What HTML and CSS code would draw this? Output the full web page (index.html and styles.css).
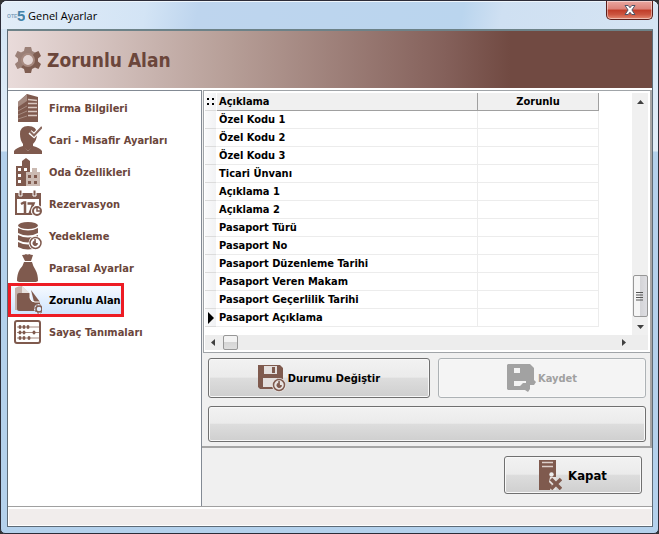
FILE: index.html
```html
<!DOCTYPE html>
<html lang="tr">
<head>
    <meta charset="utf-8">
    <title>Genel Ayarlar</title>
    <link rel="stylesheet" href="styles.css">
</head>
<body>
    <div class="window">
        <div class="titlebar">
            <svg class="app-icon" width="18" height="18" viewBox="0 0 18 18">
                <text x="0" y="12" font-family="Liberation Sans" font-size="5" fill="#7fa3bd">OTE</text>
                <text x="10" y="15" font-family="Liberation Sans" font-size="15" font-weight="bold" fill="#4583a8">5</text>
            </svg>
            <span class="window-title">Genel Ayarlar</span>
            <button class="close-btn" aria-label="Kapat">
                <svg width="12" height="10" viewBox="0 0 12 10">
                    <path d="M1 .5h3.200L6 2.700 7.800.5H11L7.900 5 11 9.500H7.800L6 7.300 4.200 9.500H1L4.100 5z" fill="#fff" stroke="#4c5468"/>
                </svg>
            </button>
        </div>

        <div class="client">
            <header class="banner">
                <svg width="26" height="26" viewBox="0 0 26 26">
                    <path fill="#7f5d51" fill-rule="evenodd" d="M10 0h6l1 4 3 1.500 3.500-1.500 2.500 5-3 2.500v3l3 2.500-2.500 5-3.500-1.500-3 1.500-1 4h-6l-1-4-3-1.500L2.500 22 0 17l3-2.500v-3L0 9l2.500-5L6 5.500 9 4zM13 7.500a5.500 5.500 0 1 0 0 11 5.500 5.500 0 0 0 0-11z"/>
                    <path fill="#fff" opacity=".22" d="M0 9l2.500-5L6 5.500 9 4l1-4h6l1 4 3 1.500L17 9A5.500 5.500 0 0 0 9 17L6 20.500 2.500 22 0 17l3-2.500v-3z"/>
                    <circle cx="13" cy="13" r="6" fill="none" stroke="#a88a80" stroke-width="2"/>
                </svg>
                <h1>Zorunlu Alan</h1>
            </header>

            <div class="content">
                <nav class="sidebar">
                    <a href="#" class="nav-item">
                        <svg width="28" height="28" viewBox="0 0 28 28">
                            <path d="M4 8L13 0v28H4z" fill="#7f5a4e"/>
                            <path d="M4 8L13 0v7L4 13z" fill="#a58a80"/>
                            <path d="M4 17l9-5M4 21l9-4M4 25l9-3" stroke="#a58a80"/>
                            <path d="M13 0l11 3v25H13z" fill="#7f5a4e"/>
                            <path d="M14 5.500l9 1M14 9.500h9M14 13.500h9M14 17.500h9M14 21.500h9" stroke="#d9c8c1" stroke-width="1.500"/>
                        </svg>
                        Firma Bilgileri
                    </a>
                    <a href="#" class="nav-item">
                        <svg width="28" height="28" viewBox="0 0 28 28">
                            <path d="M14 0q9 0 9 8 0 6-4 10v3l-5 4-5-4v-3Q6 14 6 8q0-8 8-8z" fill="#7f5a4e"/>
                            <path d="M0 28v-3q2-3 9-5l5 5 5-5q7 2 9 5v3z" fill="#7f5a4e"/>
                            <path d="M16 6l4 3.500L28 1" fill="none" stroke="#fff" stroke-width="4.500"/>
                            <path d="M16 5.500l4 4L28 1" fill="none" stroke="#8a685d" stroke-width="2.200"/>
                        </svg>
                        Cari - Misafir Ayarları
                    </a>
                    <a href="#" class="nav-item">
                        <svg width="28" height="28" viewBox="0 0 28 28">
                            <path d="M2 8h6V3l4-3 4 3v25H2z" fill="#7f5a4e"/>
                            <path d="M12 14h6v-4h5v4h3v14H12z" fill="#cbbab2"/>
                            <path d="M4 10h3v3H4zM10 10h3v3h-3zM4 16h3v3H4zM4 22h3v3H4z" fill="#fff"/>
                            <path d="M14 17h3v3h-3zM20 17h3v3h-3zM14 23h3v3h-3zM20 23h3v3h-3z" fill="#7f5a4e"/>
                        </svg>
                        Oda Özellikleri
                    </a>
                    <a href="#" class="nav-item">
                        <svg width="28" height="28" viewBox="0 0 28 28">
                            <path d="M1 3h26v22H1z" fill="#7f5a4e"/>
                            <path d="M3 9h22v14H3z" fill="#fff"/>
                            <path d="M5 0h3v6H5zM19 0h3v6h-3z" fill="#7f5a4e" stroke="#fff"/>
                            <path d="M7 14l3-1.500h1V24M13.500 13.500h6L15.500 24" fill="none" stroke="#7f5a4e" stroke-width="2.500"/>
                            <circle cx="23" cy="21" r="6" fill="#fff"/>
                            <circle cx="23" cy="21" r="4" fill="#fff" stroke="#7f5a4e" stroke-width="2"/>
                            <path d="M23 18v3h3" fill="none" stroke="#7f5a4e" stroke-width="1.500"/>
                        </svg>
                        Rezervasyon
                    </a>
                    <a href="#" class="nav-item">
                        <svg width="28" height="28" viewBox="0 0 28 28">
                            <ellipse cx="14" cy="3.500" rx="10" ry="3.500" fill="#7f5a4e"/>
                            <path d="M4 6q10 5 20 0v5q-10 5-20 0zM4 13q10 5 20 0v5q-10 5-20 0zM4 20q10 5 20 0v5q-10 5-20 0z" fill="#7f5a4e"/>
                            <circle cx="21.500" cy="21" r="7" fill="#fff"/>
                            <circle cx="21.500" cy="21" r="5.500" fill="none" stroke="#7f5a4e" stroke-width="1.500"/>
                            <path d="M21 17v2a2.300 2.300 0 1 0 2.500 2.500h-2z" fill="#7f5a4e" stroke="#7f5a4e"/>
                        </svg>
                        Yedekleme
                    </a>
                    <a href="#" class="nav-item">
                        <svg width="28" height="28" viewBox="0 0 28 28">
                            <path d="M8 1q3 0 4-1 2 1 3 0 2 1 4 1l-2 6h-6z" fill="#7f5a4e"/>
                            <path d="M10 8h8q1 4 3 7 3 5 3 12l-2 1H5l-2-1q0-7 3-12 3-3 4-7z" fill="#7f5a4e"/>
                        </svg>
                        Parasal Ayarlar
                    </a>
                    <a href="#" class="nav-item selected">
                        <svg width="28" height="28" viewBox="0 0 28 28">
                            <path d="M1 2q3-2 7-2l8 8v16H1z" fill="#c4b2ab"/>
                            <path d="M8 0l10 9-3-1H8z" fill="#e8e2df"/>
                            <path d="M17 4l9 12h-6z" fill="#7f5a4e"/>
                            <path d="M5 7h11v5q1 4 5 4h5v9H5q-2 0-2-2V9q0-2 2-2z" fill="#7f5a4e"/>
                            <path d="M16 5v7q1 4 5 4h5" fill="none" stroke="#fff"/>
                            <circle cx="25" cy="23" r="5" fill="#e0edfd"/>
                            <circle cx="25" cy="23" r="3" fill="none" stroke="#7f5a4e" stroke-width="1.500"/>
                            <circle cx="25" cy="23" r="4.200" fill="none" stroke="#7f5a4e" stroke-dasharray="1.800 1.500"/>
                        </svg>
                        Zorunlu Alan
                    </a>
                    <a href="#" class="nav-item">
                        <svg width="28" height="28" viewBox="0 0 28 28">
                            <rect x="1" y="3" width="25" height="22" rx="2" fill="#fff" stroke="#7f5a4e" stroke-width="2"/>
                            <path d="M3 9h22M3 14.500h22M3 20h22" stroke="#a58a80"/>
                            <g fill="#7f5a4e">
                                <ellipse cx="6" cy="9" rx="1.500" ry="2"/><ellipse cx="10" cy="9" rx="1.500" ry="2"/><ellipse cx="14" cy="9" rx="1.500" ry="2"/>
                                <ellipse cx="6" cy="14.500" rx="1.500" ry="2"/><ellipse cx="10" cy="14.500" rx="1.500" ry="2"/><ellipse cx="20" cy="14.500" rx="1.500" ry="2"/>
                                <ellipse cx="6" cy="20" rx="1.500" ry="2"/><ellipse cx="10" cy="20" rx="1.500" ry="2"/><ellipse cx="15" cy="20" rx="1.500" ry="2"/>
                            </g>
                        </svg>
                        Sayaç Tanımaları
                    </a>
                </nav>

                <div class="right">
                    <main class="panel">
                        <div class="grid-box">
                            <div class="grid-view">
                                <table class="grid">
                                    <thead>
                                        <tr>
                                            <th class="mark"><svg width="8" height="8" viewBox="0 0 8 8"><path d="M0 0h2v2H0zM5 0h2v2H5zM0 5h2v2H0zM5 5h2v2H5z"/></svg></th>
                                            <th class="name">Açıklama</th>
                                            <th class="req">Zorunlu</th>
                                        </tr>
                                    </thead>
                                    <tbody>
                                        <tr><td class="mark"></td><td>Özel Kodu 1</td><td></td></tr>
                                        <tr><td class="mark"></td><td>Özel Kodu 2</td><td></td></tr>
                                        <tr><td class="mark"></td><td>Özel Kodu 3</td><td></td></tr>
                                        <tr><td class="mark"></td><td>Ticari Ünvanı</td><td></td></tr>
                                        <tr><td class="mark"></td><td>Açıklama 1</td><td></td></tr>
                                        <tr><td class="mark"></td><td>Açıklama 2</td><td></td></tr>
                                        <tr><td class="mark"></td><td>Pasaport Türü</td><td></td></tr>
                                        <tr><td class="mark"></td><td>Pasaport No</td><td></td></tr>
                                        <tr><td class="mark"></td><td>Pasaport Düzenleme Tarihi</td><td></td></tr>
                                        <tr><td class="mark"></td><td>Pasaport Veren Makam</td><td></td></tr>
                                        <tr><td class="mark"></td><td>Pasaport Geçerlilik Tarihi</td><td></td></tr>
                                        <tr><td class="mark"><svg width="6" height="12" viewBox="0 0 6 12"><path d="M0 0l6 6-6 6z"/></svg></td><td>Pasaport Açıklama</td><td></td></tr>
                                    </tbody>
                                </table>
                            </div>
                            <div class="vscroll">
                                <svg class="arrow" width="7" height="4" viewBox="0 0 7 4"><path d="M0 4l3.500-4L7 4z"/></svg>
                                <div class="vthumb">
                                    <svg width="8" height="9" viewBox="0 0 8 9"><path d="M0 .5h7M0 3h7M0 5.500h7M0 8h7" stroke="#555"/></svg>
                                </div>
                                <svg class="arrow" width="7" height="4" viewBox="0 0 7 4"><path d="M0 0l3.500 4L7 0z"/></svg>
                            </div>
                            <div class="hscroll">
                                <svg class="arrow" width="4" height="7" viewBox="0 0 4 7"><path d="M4 0L0 3.500 4 7z"/></svg>
                                <div class="hthumb"></div>
                                <svg class="arrow" width="4" height="7" viewBox="0 0 4 7"><path d="M0 0l4 3.500L0 7z"/></svg>
                            </div>
                        </div>

                        <div class="buttons">
                            <button class="btn btn-change">
                                <svg width="28" height="28" viewBox="0 0 28 28">
                                    <path d="M0 1h22l3 3v21H2l-2-2z" fill="#7f5a4e"/>
                                    <path d="M6 2h13v8H6zM5 14h14v9H5z" fill="#e4dfdd"/>
                                    <path d="M14 3h3v6h-3z" fill="#7f5a4e"/>
                                    <circle cx="21" cy="21" r="7" fill="#e8e4e2"/>
                                    <circle cx="21" cy="21" r="5.500" fill="none" stroke="#7f5a4e" stroke-width="1.500"/>
                                    <path d="M21 17v2a2.300 2.300 0 1 0 2.500 2.500h-2z" fill="#7f5a4e" stroke="#7f5a4e"/>
                                </svg>
                                Durumu Değiştir
                            </button>
                            <button class="btn btn-save" disabled>
                                <svg width="29" height="28" viewBox="0 0 29 28">
                                    <path fill="#a2a2a2" fill-rule="evenodd" d="M1 0h22l4 4v12l2 2-2 3h-4v4l-2 3-3-2H1l-1-1V1zM7 4v5h6V4zM7 17v5h6l3-3h3v-2z"/>
                                </svg>
                                Kaydet
                            </button>
                        </div>
                        <button class="btn btn-wide" aria-label="Durum"></button>
                    </main>

                    <footer class="actions">
                        <button class="btn btn-close">
                            <svg width="23" height="30" viewBox="0 0 23 30">
                                <path d="M0 0h17v30H0z" fill="#7f5a4e"/>
                                <path d="M3 2.500h11M3 6.500h11" stroke="#ddd0cb" stroke-width="1.500"/>
                                <circle cx="12.500" cy="14.500" r="2.200" fill="#eee"/>
                                <path d="M11 17l-1 5 3 3-2 5h6V17z" fill="#e6e0de"/>
                                <path d="M12 19l10 10M22 19L12 29" stroke="#7f5a4e" stroke-width="3.500"/>
                            </svg>
                            Kapat
                        </button>
                    </footer>
                </div>
            </div>

            <div class="statusbar"></div>
        </div>
    </div>
</body>
</html>
```
FILE: styles.css
```css
* {
    box-sizing: border-box;
}

body {
    margin: 0;
    background: #333;
    font-family: "DejaVu Sans Condensed", "Noto Sans", sans-serif;
    font-size: 11px;
    font-weight: bold;
    color: #000;
}

button {
    font: inherit;
}

svg {
    flex: none;
    display: block;
}

/* window frame */
.window {
    display: flex;
    flex-direction: column;
    min-height: 100vh;
    padding: 0 5px 6px 6px;
    border: 1px solid #2c2c38;
    border-radius: 7px 7px 5px 5px;
    background: linear-gradient(180deg, rgba(255,255,255,0.4) 0, rgba(255,255,255,0.6) 150px, rgba(255,255,255,0) 151px), #b4d1ec;
}

.titlebar {
    display: flex;
    align-items: center;
    height: 28px;
    margin: 0 -5px 0 -6px;
    padding-left: 6px;
    border-radius: 6px 6px 0 0;
    background: linear-gradient(100deg, #e2edf8 0%, #d3e4f5 22%, #bed5ee 30%, #bad5ee 70%, #cfe0f2 76%, #d5e4f3 100%);
    box-shadow: inset 0 1px #eef5fb;
}

.window-title {
    flex: 1;
    padding-left: 3px;
    font-family: "Open Sans", sans-serif;
    font-weight: normal;
}

.close-btn {
    display: flex;
    align-items: center;
    justify-content: center;
    align-self: flex-start;
    width: 47px;
    height: 19px;
    margin-right: 5px;
    padding: 0;
    border: 1px solid #5c1e1a;
    border-top: none;
    border-radius: 0 0 5px 5px;
    background: linear-gradient(#eaa7a0 0%, #dc8278 45%, #c03c28 50%, #cb5540 75%, #e58a73 100%);
    box-shadow: inset 0 0 0 1px rgba(255,255,255,0.45);
}

.client {
    flex: 1;
    display: flex;
    flex-direction: column;
    border: 1px solid #5d6a76;
    border-top: 2px solid #6d8288;
    background: #f0f0f0;
}

.banner {
    display: flex;
    align-items: center;
    gap: 6px;
    height: 57px;
    padding-left: 7px;
    background: linear-gradient(90deg, #e9dbda 0%, #b79f98 34%, #84605a 68%, #714a42 78%, #714a42 100%);
}

.banner h1 {
    margin: 0;
    font-size: 19px;
    color: #6b463b;
}

.content {
    flex: 1;
    display: flex;
    border-top: 2px solid #fff;
}

/* left menu */
.sidebar {
    display: flex;
    flex-direction: column;
    align-items: flex-start;
    gap: 4px;
    width: 194px;
    padding: 3px;
    border: 1px solid #838a94;
    border-left: none;
    background: #fff;
}

.nav-item {
    display: flex;
    align-items: center;
    gap: 7px;
    height: 28px;
    padding-left: 3px;
    color: #6b463b;
    text-decoration: none;
    white-space: nowrap;
}

.nav-item.selected {
    color: #000;
    background: linear-gradient(#f6faff, #cfe4fd);
    outline: 3px solid #ed1c24;
}

.right {
    flex: 1;
    display: flex;
    flex-direction: column;
    min-width: 0;
}

.panel {
    flex: 1;
    display: flex;
    flex-direction: column;
    border-right: 2px solid #a5a5a5;
    border-bottom: 2px solid #a5a5a5;
}

/* grid */
.grid-box {
    flex: 1;
    display: grid;
    grid-template-columns: 1fr 16px;
    grid-template-rows: 1fr 15px;
    margin-left: 1px;
    padding: 2px 2px 2px 1px;
    border: 1px solid #a0a4a8;
    border-right: none;
    background: #fff;
}

.grid-view {
    overflow: hidden;
}

.grid {
    border-collapse: separate;
    border-spacing: 0;
    table-layout: fixed;
    width: 394px;
}

.grid th,
.grid td {
    height: 18px;
    padding: 0 2px;
    line-height: 16px;
    text-align: left;
    white-space: nowrap;
    border-right: 1px solid #ececec;
    border-bottom: 1px solid #ececec;
}

.grid th {
    background: #f0f0f0;
    border-right-color: #a0a0a0;
    border-bottom-color: #a0a0a0;
}

.grid .mark {
    width: 12px;
    padding: 0;
    border-right-color: #fff;
    border-bottom-color: #dcdcdc;
    background: linear-gradient(90deg, #fafafb, #f1f2f4);
}

.grid .mark svg {
    margin-left: 3px;
}

.grid th.mark svg {
    margin-left: 2px;
}

.grid .name {
    width: 261px;
}

.grid .req {
    text-align: center;
}

/* scroll bars */
.arrow {
    fill: #404040;
}

.vscroll {
    display: flex;
    flex-direction: column;
    align-items: center;
    padding: 7px 0 6px;
    background: #f0f0f0;
}

.vthumb {
    display: flex;
    align-items: center;
    justify-content: center;
    width: 15px;
    height: 42px;
    margin-top: auto;
    margin-bottom: 8px;
    border: 1px solid #979797;
    border-radius: 2px;
    background: linear-gradient(90deg, #f5f5f5 45%, #d4d4d8 50%, #dedee2);
}

.hscroll {
    grid-column: 1 / -1;
    display: flex;
    align-items: center;
    padding: 0 22px 0 6px;
    background: #ededed;
}

.hthumb {
    width: 15px;
    height: 15px;
    margin-left: 8px;
    margin-right: auto;
    border: 1px solid #979797;
    border-radius: 2px;
    background: linear-gradient(#f3f3f3 45%, #d6d6d6 50%, #dedede);
}

/* buttons */
.buttons {
    display: flex;
    gap: 8px;
    padding: 5px 4px 8px 6px;
}

.btn {
    display: flex;
    align-items: center;
    justify-content: center;
    gap: 2px;
    height: 40px;
    padding: 0;
    border: 1px solid #707070;
    border-radius: 3px;
    background: linear-gradient(#f2f2f2 0%, #ebebeb 48%, #dddddd 50%, #cfcfcf 100%);
    box-shadow: inset 0 0 0 1px #f8f8f8;
    color: #000;
}

.btn-change {
    flex: 222;
}

.btn-save {
    flex: 208;
    border-color: #adb2b5;
    background: #f4f4f4;
    color: #a0a0a0;
}

.btn-wide {
    height: 36px;
    margin: 0 4px 4px 6px;
}

.actions {
    display: flex;
    justify-content: flex-end;
    padding: 8px 10px 13px;
}

.btn-close {
    gap: 6px;
    width: 138px;
    height: 38px;
    font-size: 13px;
}

.statusbar {
    height: 19px;
    border: 1px solid #fff;
    border-top: 2px solid #fff;
    background: #f1edec;
    box-shadow: 0 -1px #a0a0a0;
}
```
